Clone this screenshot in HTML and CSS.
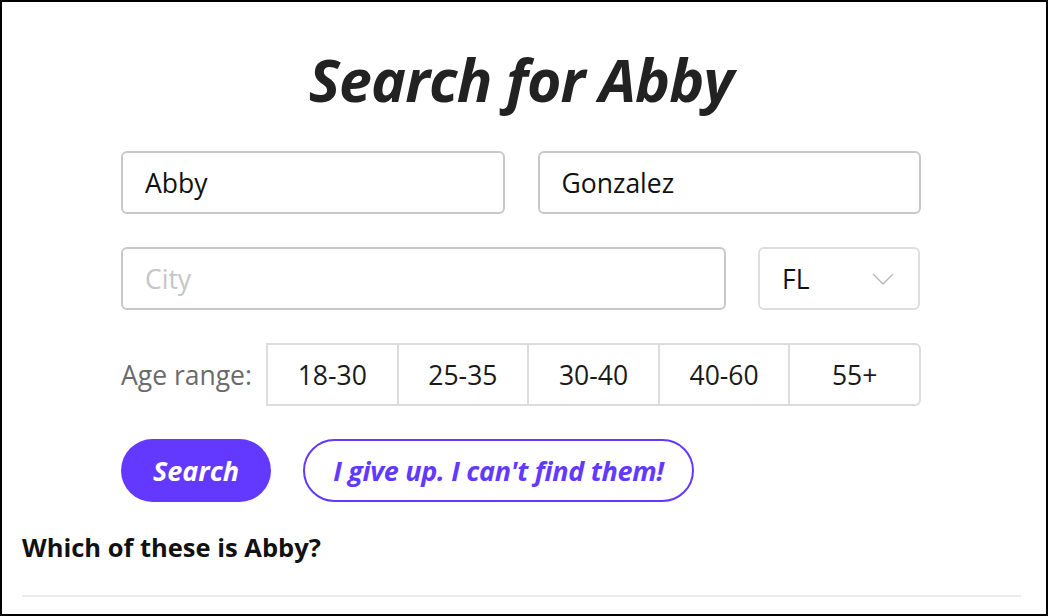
FILE: index.html
```html
<!DOCTYPE html>
<html>
<head>
<meta charset="utf-8">
<link rel="stylesheet" href="styles.css">
</head>
<body>
<div class="frame">
  <div class="main">
    <h1 class="title">Search for Abby</h1>
    <div class="row">
      <input class="field grow" type="text" value="Abby">
      <input class="field grow" type="text" value="Gonzalez">
    </div>
    <div class="row">
      <input class="field city" type="text" placeholder="City">
      <div class="select">
        <span>FL</span>
        <svg class="chev" width="22" height="12" viewBox="0 0 22 12"><path d="M1 1 L11 11 L21 1" fill="none" stroke="#b5b5b5" stroke-width="1.3"/></svg>
      </div>
    </div>
    <div class="row age">
      <span class="age-label">Age range:</span>
      <div class="segments">
        <div class="seg">18-30</div>
        <div class="seg">25-35</div>
        <div class="seg">30-40</div>
        <div class="seg">40-60</div>
        <div class="seg">55+</div>
      </div>
    </div>
    <div class="row buttons">
      <button class="btn primary">Search</button>
      <button class="btn outline">I give up. I can't find them!</button>
    </div>
  </div>
  <h2 class="which">Which of these is Abby?</h2>
  <div class="rule"></div>
</div>
</body>
</html>
```
FILE: styles.css
```css
* { box-sizing: border-box; }
html, body { margin: 0; padding: 0; }
body {
  font-family: "Open Sans", "Noto Sans", sans-serif;
  color: #222;
  background: #fff;
}
.frame {
  width: 1048px;
  height: 616px;
  border: 2px solid #000;
  padding: 0 25px 0 20px;
  display: flex;
  flex-direction: column;
}
.main {
  width: 800px;
  margin-left: 99px;
  display: flex;
  flex-direction: column;
}
.title {
  margin: 37px 0 0 0;
  text-align: center;
  font-size: 59px;
  font-weight: 700;
  font-style: italic;
  line-height: 80px;
  color: #222;
  letter-spacing: -0.9px;
}
.row {
  display: flex;
  gap: 33px;
  margin-top: 33px;
  height: 63px;
}
.row:first-of-type { margin-top: 32px; }
.field {
  height: 63px;
  border: 2px solid #c8c8c8;
  border-radius: 6px;
  padding: 0 22px;
  font-family: inherit;
  font-size: 26.5px;
  color: #111;
  outline: none;
  background: #fff;
}
.field::placeholder { color: #c6c6c6; }
.grow { flex: 1; min-width: 0; }
.city { width: 605px; }
.select {
  width: 162px;
  height: 63px;
  margin-left: -1px;
  border: 2px solid #dedede;
  border-radius: 6px;
  padding: 0 24px 0 22px;
  display: flex;
  align-items: center;
  justify-content: space-between;
  font-size: 26.5px;
  color: #111;
}
.age { gap: 0; align-items: center; justify-content: space-between; }
.age-label {
  font-size: 26.5px;
  color: #6b6b6b;
}
.segments {
  width: 655px;
  display: flex;
  height: 63px;
  border: 2px solid #dcdcdc;
  border-radius: 0 6px 6px 0;
}
.seg {
  flex: 1;
  display: flex;
  align-items: center;
  justify-content: center;
  font-size: 26.5px;
  color: #1a1a1a;
  border-left: 2px solid #dcdcdc;
}
.seg:first-child { border-left: none; }
.buttons { gap: 32px; }
.btn {
  height: 63px;
  border-radius: 32px;
  font-family: inherit;
  font-size: 27px;
  font-weight: 700;
  font-style: italic;
  cursor: pointer;
}
.primary {
  width: 150px;
  background: #6439ff;
  border: none;
  color: #fff;
  letter-spacing: 0;
}
.outline {
  width: 391px;
  background: #fff;
  border: 2px solid #6439ff;
  color: #6439ff;
  letter-spacing: -0.3px;
}
.which {
  margin: 29px 0 0 0;
  font-size: 25.5px;
  font-weight: 700;
  color: #111;
  line-height: 32px;
  letter-spacing: 0;
}
.rule {
  margin-top: 32px;
  height: 2px;
  background: #ececec;
}
```
